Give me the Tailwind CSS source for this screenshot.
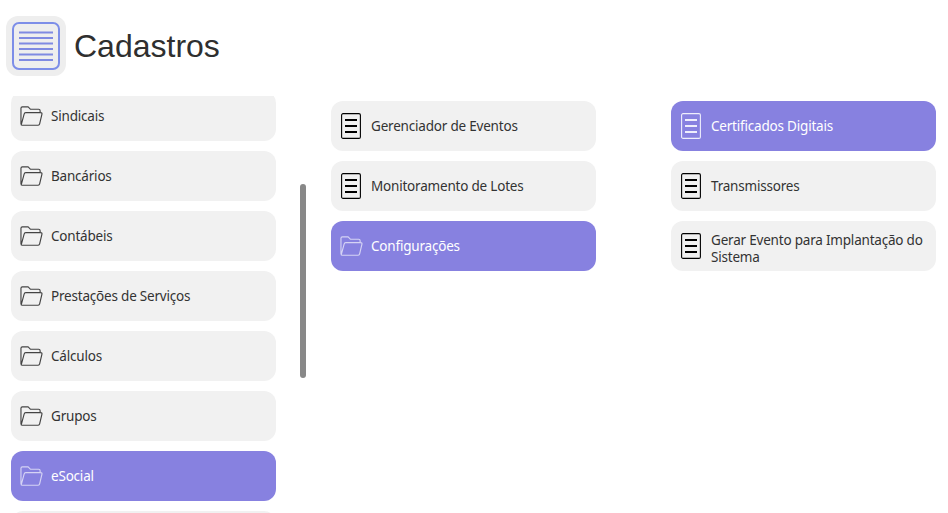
<!DOCTYPE html>
<html><head><meta charset="utf-8"><script src="https://cdn.jsdelivr.net/npm/@tailwindcss/browser@4"></script></head>
<body class="h-[513px] w-[948px] overflow-hidden bg-white font-['Noto_Sans',sans-serif] text-[13.5px] tracking-[-0.2px] text-[#333]">
<svg class="hidden"><defs>
<symbol id="folder" viewBox="0 0 24 22"><path d="M1 19.500 V3 Q1 1.500 2.500 1.500 H8.500 L11 4 H19.500 Q21 4 21 5.500 V7.500 M1.200 20.500 L4.300 9 Q4.600 7.500 6 7.500 H21.500 Q23.200 7.500 22.900 9 L20.500 19.300 Q20.200 20.600 19 20.600 H2.500 Q1.200 20.600 1.200 20.500 Z" fill="none" stroke="currentColor" stroke-width="1.200" stroke-linejoin="round"/></symbol>
<symbol id="doc" viewBox="0 0 20 26"><rect x="0.6" y="0.6" width="18.8" height="24.8" rx="1.5" fill="none" stroke="currentColor" stroke-width="1.1"/><path d="M4 7H16M4 13H16M4 19H16" stroke="currentColor" stroke-width="2" fill="none"/></symbol>
</defs></svg>
<header class="flex h-[96px] items-start pl-[6px] pt-[16px]">
<div class="flex h-[60px] w-[60px] items-center justify-center rounded-[12px] bg-[#eeeeee]">
<svg width="48" height="48" viewBox="0 0 48 48"><rect x="1" y="1" width="46" height="46" rx="6" fill="none" stroke="#7d8ee8" stroke-width="2"/><path d="M7 10.500H41M7 16H41M7 21.500H41M7 27H41M7 32.500H41M7 38H41" stroke="#7f8ae2" stroke-width="1.800"/></svg>
</div>
<h1 class="ml-[8px] mt-[12px] font-['Liberation_Sans',sans-serif] text-[32px] leading-[37px] tracking-normal text-[#2f2f2f]">Cadastros</h1>
</header>
<main class="flex h-[417px] pl-[11px]">
<div class="relative h-full w-[320px] shrink-0 overflow-hidden">
<div class="-mt-[5px] flex w-[265px] flex-col gap-[10px]">
<a class="flex h-[50px] items-center gap-[8px] rounded-[12px] bg-[#f1f1f1] pl-[9px]"><svg class="h-[22px] w-[23px] shrink-0 text-[#444]"><use href="#folder"/></svg><span>Sindicais</span></a>
<a class="flex h-[50px] items-center gap-[8px] rounded-[12px] bg-[#f1f1f1] pl-[9px]"><svg class="h-[22px] w-[23px] shrink-0 text-[#444]"><use href="#folder"/></svg><span>Bancários</span></a>
<a class="flex h-[50px] items-center gap-[8px] rounded-[12px] bg-[#f1f1f1] pl-[9px]"><svg class="h-[22px] w-[23px] shrink-0 text-[#444]"><use href="#folder"/></svg><span>Contábeis</span></a>
<a class="flex h-[50px] items-center gap-[8px] rounded-[12px] bg-[#f1f1f1] pl-[9px]"><svg class="h-[22px] w-[23px] shrink-0 text-[#444]"><use href="#folder"/></svg><span>Prestações de Serviços</span></a>
<a class="flex h-[50px] items-center gap-[8px] rounded-[12px] bg-[#f1f1f1] pl-[9px]"><svg class="h-[22px] w-[23px] shrink-0 text-[#444]"><use href="#folder"/></svg><span>Cálculos</span></a>
<a class="flex h-[50px] items-center gap-[8px] rounded-[12px] bg-[#f1f1f1] pl-[9px]"><svg class="h-[22px] w-[23px] shrink-0 text-[#444]"><use href="#folder"/></svg><span>Grupos</span></a>
<a class="flex h-[50px] items-center gap-[8px] rounded-[12px] bg-[#8781e0] pl-[9px] text-white"><svg class="h-[22px] w-[23px] shrink-0 text-[#d5d3f4]"><use href="#folder"/></svg><span>eSocial</span></a>
<a class="flex h-[50px] items-center gap-[8px] rounded-[12px] bg-[#f1f1f1] pl-[9px]"></a>
</div>
<div class="absolute left-[289px] top-[88px] h-[194px] w-[6px] rounded-full bg-[#888888]"></div>
</div>
<div class="flex w-[265px] shrink-0 flex-col gap-[10px] pt-[5px]">
<a class="flex h-[50px] items-center gap-[10px] rounded-[12px] bg-[#f1f1f1] pl-[10px]"><svg class="h-[26px] w-[20px] shrink-0 text-black"><use href="#doc"/></svg><span>Gerenciador de Eventos</span></a>
<a class="flex h-[50px] items-center gap-[10px] rounded-[12px] bg-[#f1f1f1] pl-[10px]"><svg class="h-[26px] w-[20px] shrink-0 text-black"><use href="#doc"/></svg><span>Monitoramento de Lotes</span></a>
<a class="flex h-[50px] items-center gap-[8px] rounded-[12px] bg-[#8781e0] pl-[9px] text-white"><svg class="h-[22px] w-[23px] shrink-0 text-[#d5d3f4]"><use href="#folder"/></svg><span>Configurações</span></a>
</div>
<div class="ml-[75px] flex w-[265px] shrink-0 flex-col gap-[10px] pt-[5px]">
<a class="flex h-[50px] items-center gap-[10px] rounded-[12px] bg-[#8781e0] pl-[10px] text-white"><svg class="h-[26px] w-[20px] shrink-0 text-[#eeeefc]"><use href="#doc"/></svg><span>Certificados Digitais</span></a>
<a class="flex h-[50px] items-center gap-[10px] rounded-[12px] bg-[#f1f1f1] pl-[10px]"><svg class="h-[26px] w-[20px] shrink-0 text-black"><use href="#doc"/></svg><span>Transmissores</span></a>
<a class="flex h-[50px] items-center gap-[10px] rounded-[12px] bg-[#f1f1f1] pl-[10px] leading-[17px]"><svg class="h-[26px] w-[20px] shrink-0 text-black"><use href="#doc"/></svg><span class="pt-[6px]">Gerar Evento para Implantação do Sistema</span></a>
</div>
</main>
</body></html>
